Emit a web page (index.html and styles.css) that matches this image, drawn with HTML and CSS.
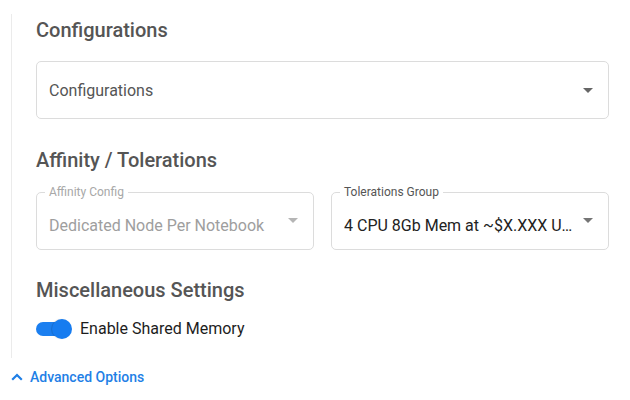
FILE: index.html
```html
<!DOCTYPE html>
<html>
<head>
<meta charset="utf-8">
<link rel="stylesheet" href="styles.css">
</head>
<body>
<div class="panel">
  <h2 class="heading">Configurations</h2>
  <div class="select plain">
    <span class="value muted">Configurations</span>
    <svg class="arrow" viewBox="0 0 24 24" width="24" height="24"><path d="M7 10l5 5 5-5z" fill="#666"/></svg>
  </div>

  <h2 class="heading sec">Affinity / Tolerations</h2>
  <div class="row">
    <div class="select labeled disabled">
      <span class="label">Affinity Config</span>
      <span class="value">Dedicated Node Per Notebook</span>
      <svg class="arrow" viewBox="0 0 24 24" width="24" height="24"><path d="M7 10l5 5 5-5z" fill="#b5b5b5"/></svg>
    </div>
    <div class="select labeled">
      <span class="label">Tolerations Group</span>
      <span class="value">4 CPU 8Gb Mem at ~$X.XXX U…</span>
      <svg class="arrow" viewBox="0 0 24 24" width="24" height="24"><path d="M7 10l5 5 5-5z" fill="#757575"/></svg>
    </div>
  </div>

  <h2 class="heading sec">Miscellaneous Settings</h2>
  <div class="toggle-row">
    <span class="toggle"><span class="track"></span><span class="thumb"></span></span>
    <span class="toggle-text">Enable Shared Memory</span>
  </div>
</div>
<div class="advanced">
  <svg class="chev" viewBox="0 0 12 8" width="12" height="8"><polyline points="1.2,6.8 6,2 10.8,6.8" fill="none" stroke="#1f7fe6" stroke-width="2.2"/></svg>
  <span>Advanced Options</span>
</div>
</body>
</html>
```
FILE: styles.css
```css
html, body {
  margin: 0;
  padding: 0;
  background: #ffffff;
  font-family: Roboto, "Liberation Sans", sans-serif;
}

.panel {
  margin: 14px 0 0 11px;
  border-left: 1px solid #ebebeb;
  padding: 4px 21px 17px 24px;
  width: 573px;
}

.heading {
  margin: 0 0 19px 0;
  font-size: 20px;
  line-height: 24px;
  font-weight: 500;
  color: #555555;
}

.heading.sec {
  margin-top: 29px;
  margin-bottom: 20px;
}

.select {
  position: relative;
  box-sizing: border-box;
  height: 58px;
  border: 1px solid #dcdcdc;
  border-radius: 5px;
  display: flex;
  align-items: center;
  padding: 0 8px 0 12px;
}

.value {
  flex: 1;
  font-size: 16px;
  line-height: 24px;
  color: #222222;
  white-space: nowrap;
  overflow: hidden;
}

.value.muted {
  color: #555555;
}

.plain .value {
  padding-top: 2px;
}

.labeled .value {
  padding-top: 9px;
}

.arrow {
  flex: none;
  margin-top: -2px;
}

.plain .arrow {
  margin-top: 0;
}

.label {
  position: absolute;
  top: -9px;
  left: 8px;
  padding: 0 4px;
  background: #ffffff;
  font-size: 12px;
  line-height: 16px;
  color: #555555;
}

.disabled .label {
  color: #a8a8a8;
}

.disabled .value {
  color: #9e9e9e;
}

.row {
  display: grid;
  grid-template-columns: 1fr 1fr;
  column-gap: 17px;
}

.row + .heading.sec {
  margin-top: 28px;
  margin-bottom: 15px;
}

.toggle-row {
  display: flex;
  align-items: center;
  height: 24px;
  gap: 8px;
}

.toggle {
  position: relative;
  width: 36px;
  height: 20px;
  flex: none;
}

.track {
  position: absolute;
  left: 0;
  top: 3px;
  width: 30px;
  height: 14px;
  border-radius: 7px;
  background: #1b7ff0;
}

.thumb {
  position: absolute;
  right: 0;
  top: 0;
  width: 20px;
  height: 20px;
  border-radius: 50%;
  background: #167cf0;
  box-shadow: -1px 0 1px rgba(0, 0, 0, 0.15);
}

.toggle-text {
  font-size: 16px;
  line-height: 24px;
  color: #1d1d1d;
}

.advanced {
  display: flex;
  align-items: center;
  gap: 7px;
  margin-top: 9px;
  padding-left: 11px;
  height: 20px;
  font-size: 14px;
  font-weight: 500;
  color: #1f7fe6;
}

.chev {
  flex: none;
  margin-top: -1px;
}
```
